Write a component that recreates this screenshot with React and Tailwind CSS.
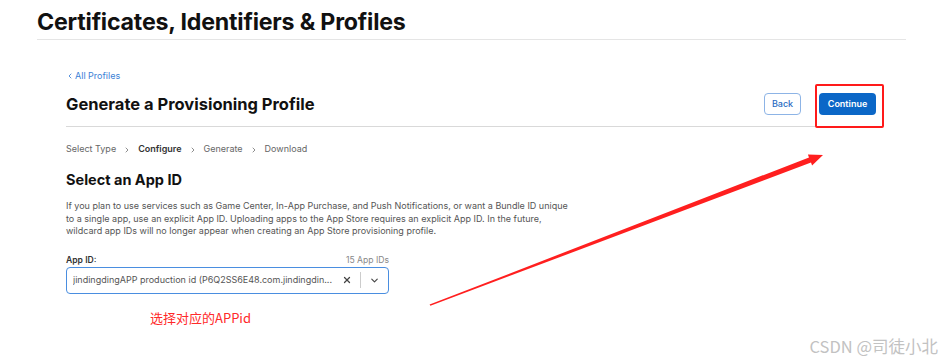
import { ChevronLeft, ChevronRight, ChevronDown, X } from "lucide-react";

const steps = [
  { label: "Select Type" },
  { label: "Configure", active: true },
  { label: "Generate" },
  { label: "Download" },
];

export default function App() {
  return (
    <div className="relative h-[362px] w-[943px] overflow-hidden bg-white font-['Inter',sans-serif] text-[#1d1d1f]">
      <div className="px-[37px] pt-[9px]">
        <h1 className="border-b border-[#e5e5e5] pb-[3px] text-[23.2px] font-bold leading-[27px] tracking-[-0.2px] text-[#111]">
          Certificates, Identifiers &amp; Profiles
        </h1>
      </div>

      <div className="ml-[66px] w-[810px] pt-[30px]">
        <a className="flex items-center text-[9px] leading-[12px] text-[#3b7fd6]">
          <ChevronLeft size={8} strokeWidth={2.5} />
          <span className="ml-[1px]">All Profiles</span>
        </a>

        <div className="mt-[10px] flex items-center justify-between border-b border-[#d9d9d9] pb-[10px]">
          <h2 className="text-[16.5px] font-bold leading-[24px] text-[#111]">Generate a Provisioning Profile</h2>
          <div className="flex items-center gap-[18px]">
            <button className="h-[22px] w-[37px] rounded-[4px] border border-[#8db4e6] text-[9px] font-medium text-[#2a6cc2]">
              Back
            </button>
            <button className="h-[22px] w-[57px] rounded-[4px] bg-[#0b67c7] text-[9px] font-semibold text-white">
              Continue
            </button>
          </div>
        </div>

        <div className="mt-[16px] flex items-center text-[9px] leading-[12px] text-[#666]">
          {steps.map((s, i) => (
            <div key={s.label} className="flex items-center">
              {i > 0 && <ChevronRight size={8} strokeWidth={2} className="mx-[7px] mt-[2px] text-[#555]" />}
              <span className={s.active ? "font-semibold text-[#333]" : ""}>{s.label}</span>
            </div>
          ))}
        </div>

        <h3 className="mt-[15px] text-[14.5px] font-bold leading-[20px] text-[#111]">Select an App ID</h3>

        <p className="mt-[10px] w-[512px] text-[9px] leading-[12.5px] text-[#555]">
          If you plan to use services such as Game Center, In-App Purchase, and Push Notifications, or want a Bundle ID unique
          to a single app, use an explicit App ID. Uploading apps to the App Store requires an explicit App ID. In the future,
          wildcard app IDs will no longer appear when creating an App Store provisioning profile.
        </p>

        <div className="mt-[16px] w-[323px]">
          <div className="flex items-end justify-between">
            <span className="text-[8.6px] font-semibold leading-[12px] text-[#333]">App ID:</span>
            <span className="text-[8.6px] leading-[12px] text-[#888]">15 App IDs</span>
          </div>
          <div className="mt-[1px] flex h-[27px] items-center rounded-[4px] border-[1.5px] border-[#4a8ee0] pl-[6px] pr-[8px]">
            <span className="flex-1 truncate text-[9px] text-[#555]">
              jindingdingAPP production id (P6Q2SS6E48.com.jindingdin...
            </span>
            <X size={10} strokeWidth={3} className="ml-[4px] text-[#444]" />
            <span className="mx-[8px] h-[16px] w-px bg-[#ccc]" />
            <ChevronDown size={11} strokeWidth={2.5} className="text-[#444]" />
          </div>
        </div>

        <p className="ml-[84px] mt-[15px] font-['Noto_Sans_CJK_SC',sans-serif] text-[13px] leading-[18px] text-[#ff2a2a]">
          选择对应的APPid
        </p>
      </div>

      {/* annotation box around Continue */}
      <div className="absolute left-[815px] top-[84px] h-[44px] w-[69px] rounded-[2px] border-2 border-[#ff1a1a]" />

      {/* annotation arrow */}
      <svg className="absolute left-0 top-0" width="943" height="362" viewBox="0 0 943 362">
        <polygon
          points="429.6,304.6 809,157.4 807.9,154.4 823,155 812.1,165.6 811,162.6 430.4,305.8"
          fill="#ff1f1f"
        />
      </svg>

      <span className="absolute bottom-[5px] right-[5px] font-['Noto_Sans_CJK_SC',sans-serif] text-[16.5px] leading-[22px] text-[#c2c2c2]">
        CSDN @司徒小北
      </span>
    </div>
  );
}
